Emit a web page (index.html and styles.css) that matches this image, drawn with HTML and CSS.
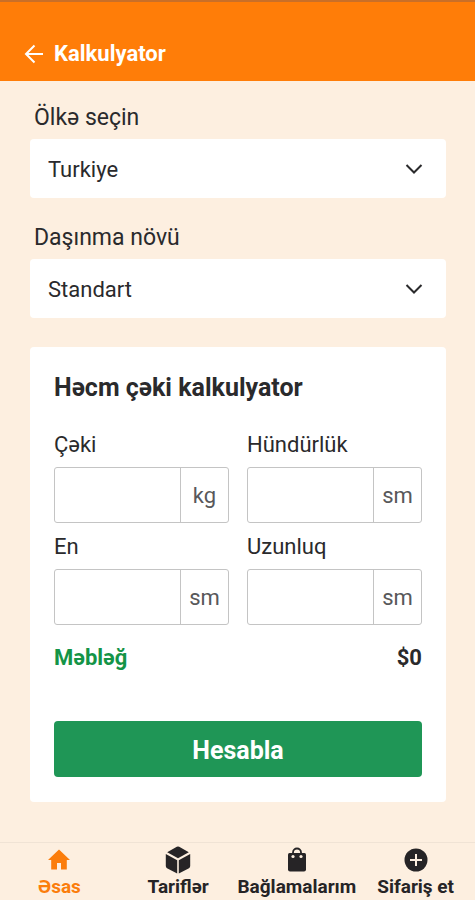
FILE: index.html
```html
<!DOCTYPE html>
<html lang="az">
<head>
  <meta charset="utf-8">
  <meta name="viewport" content="width=device-width, initial-scale=1">
  <title>Kalkulyator</title>
  <link rel="stylesheet" href="styles.css">
</head>
<body>
  <header class="topbar">
    <a class="back" href="#" aria-label="Geri">
      <svg viewBox="0 0 20 20" width="20" height="20" fill="none" stroke="currentColor" stroke-width="2"><path d="M19 10H2M10.500 1.500L2 10l8.500 8.500"/></svg>
    </a>
    <h1 class="topbar-title">Kalkulyator</h1>
  </header>

  <main class="content">
    <div class="field">
      <label class="field-label" for="country">Ölkə seçin</label>
      <div class="select-wrap">
        <select class="select" id="country"><option>Turkiye</option></select>
        <svg class="chevron" viewBox="0 0 18 12" width="18" height="12" fill="none" stroke="currentColor" stroke-width="2"><path d="M1.500 2L9 9.500 16.500 2"/></svg>
      </div>
    </div>
    <div class="field">
      <label class="field-label" for="shipping">Daşınma növü</label>
      <div class="select-wrap">
        <select class="select" id="shipping"><option>Standart</option></select>
        <svg class="chevron" viewBox="0 0 18 12" width="18" height="12" fill="none" stroke="currentColor" stroke-width="2"><path d="M1.500 2L9 9.500 16.500 2"/></svg>
      </div>
    </div>

    <form class="card">
      <h2 class="card-title">Həcm çəki kalkulyator</h2>
      <div class="grid">
        <div class="measure">
          <label class="measure-label" for="weight">Çəki</label>
          <div class="group"><input class="input" id="weight" type="text" inputmode="decimal"><span class="unit">kg</span></div>
        </div>
        <div class="measure">
          <label class="measure-label" for="height">Hündürlük</label>
          <div class="group"><input class="input" id="height" type="text" inputmode="decimal"><span class="unit">sm</span></div>
        </div>
        <div class="measure">
          <label class="measure-label" for="width">En</label>
          <div class="group"><input class="input" id="width" type="text" inputmode="decimal"><span class="unit">sm</span></div>
        </div>
        <div class="measure">
          <label class="measure-label" for="length">Uzunluq</label>
          <div class="group"><input class="input" id="length" type="text" inputmode="decimal"><span class="unit">sm</span></div>
        </div>
      </div>
      <div class="total"><span class="total-label">Məbləğ</span><output class="total-value">$0</output></div>
      <button class="submit" type="button">Hesabla</button>
    </form>
  </main>

  <nav class="tabs">
    <a class="tab tab-active" href="#">
      <svg class="tab-icon" viewBox="0 0 28 28" width="28" height="28" fill="currentColor"><path d="M14 3.500L3 14h3.200v9.500H12v-6.500h4v6.500h5.800V14H25z"/></svg>
      <span>Əsas</span>
    </a>
    <a class="tab" href="#">
      <svg class="tab-icon" viewBox="0 0 28 28" width="28" height="28" fill="currentColor"><path d="M12.800 .8Q14 .2 15.200 .8L24.800 6.200 14 12.200 3.200 6.200zM1.800 8l11.400 6.300V27.500L3 22.200Q1.800 21.500 1.800 20zM26.200 8l-11.400 6.300V27.500L25 22.200Q26.200 21.500 26.200 20z"/></svg>
      <span>Tariflər</span>
    </a>
    <a class="tab" href="#">
      <svg class="tab-icon" viewBox="0 0 28 28" width="28" height="28"><path fill="currentColor" d="M6.500 7h15q1.500 0 1.500 1.500V23.500q0 2-2 2H7q-2 0-2-2V8.500Q5 7 6.500 7z"/><path fill="none" stroke="currentColor" stroke-width="1.800" d="M10 8V6.500a4 4 0 0 1 8 0V8"/><g class="tab-cutout"><circle cx="10" cy="10.500" r="1.600"/><circle cx="18" cy="10.500" r="1.600"/></g></svg>
      <span>Bağlamalarım</span>
    </a>
    <a class="tab" href="#">
      <svg class="tab-icon" viewBox="0 0 28 28" width="28" height="28"><circle cx="14" cy="14" r="11.500" fill="currentColor"/><path class="tab-cross" d="M14 8v12M8 14h12"/></svg>
      <span>Sifariş et</span>
    </a>
  </nav>
</body>
</html>
```

FILE: styles.css
```css
* { box-sizing: border-box; }

body {
  margin: 0;
  min-height: 100vh;
  display: flex;
  flex-direction: column;
  background: #fdefe0;
  color: #2a2a2c;
  font-family: Roboto, "Noto Sans", sans-serif;
  font-size: 22px;
  line-height: 28px;
}

.topbar {
  display: flex;
  align-items: center;
  gap: 10px;
  padding: 38px 24px 13px;
  border-top: 2px solid #c96f28;
  background: #ff7d08;
  color: #fff;
}

.back { display: flex; color: inherit; }

.topbar-title {
  margin: 0;
  font-size: 22px;
  font-weight: 700;
}

.content {
  flex: 1;
  display: flex;
  flex-direction: column;
  padding: 23px 29px 39px 30px;
}

.field { margin-bottom: 26px; }

.field-label {
  display: block;
  padding-left: 4px;
  margin-bottom: 7px;
  font-size: 23px;
}

.select-wrap { display: grid; align-items: center; }

.select {
  grid-area: 1 / 1;
  width: 100%;
  height: 59px;
  padding: 2px 48px 0 18px;
  border: 0;
  border-radius: 4px;
  appearance: none;
  background: #fff;
  color: inherit;
  font: inherit;
}

.chevron {
  grid-area: 1 / 1;
  justify-self: end;
  margin-right: 23px;
  pointer-events: none;
}

.card {
  margin-top: 3px;
  padding: 24px 24px 25px;
  border-radius: 4px;
  background: #fff;
}

.card-title {
  margin: 3px 0 29px;
  font-size: 25px;
  font-weight: 700;
}

.grid {
  display: grid;
  grid-template-columns: repeat(2, minmax(0, 1fr));
  gap: 10px 18px;
}

.measure-label {
  display: block;
  margin-bottom: 8px;
}

.group {
  display: flex;
  height: 56px;
  border: 1px solid #c4c4c4;
  border-radius: 3px;
}

.input {
  flex: 1;
  min-width: 0;
  padding: 0 12px;
  border: 0;
  background: transparent;
  color: inherit;
  font: inherit;
}

.unit {
  display: flex;
  align-items: center;
  justify-content: center;
  flex: none;
  width: 48px;
  padding-top: 2px;
  border-left: 1px solid #c4c4c4;
  color: #58585a;
}

.total {
  display: flex;
  justify-content: space-between;
  margin: 19px 0 49px;
  font-weight: 700;
}

.total-label { color: #149447; }

.submit {
  display: block;
  width: 100%;
  height: 56px;
  padding: 4px 8px 0;
  border: 0;
  border-radius: 4px;
  background: #1f9656;
  color: #fff;
  font: inherit;
  font-size: 25px;
  font-weight: 700;
}

.tabs {
  display: grid;
  grid-template-columns: repeat(4, 1fr);
  border-top: 1px solid #f0e3d5;
}

.tab {
  display: flex;
  flex-direction: column;
  align-items: center;
  padding-top: 3px;
  color: #262426;
  font-size: 19px;
  font-weight: 700;
  line-height: 26px;
  white-space: nowrap;
  text-decoration: none;
}

.tab-active { color: #fb7d0c; }

.tab-cutout { fill: #fdefe0; }

.tab-cross {
  fill: none;
  stroke: #fdefe0;
  stroke-width: 2;
}
```
